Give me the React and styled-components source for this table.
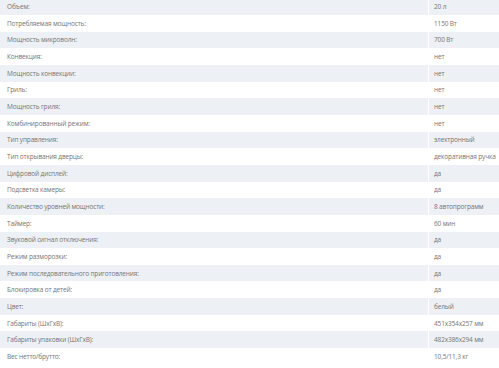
import React from "react";
import styled, { createGlobalStyle } from "styled-components";

const Global = createGlobalStyle`
  html, body { margin: 0; padding: 0; background: #fff; }
  body { font-family: "Open Sans", "Liberation Sans", sans-serif; }
`;

const rows = [
  ["Объем:", "20 л"],
  ["Потребляемая мощность:", "1150 Вт"],
  ["Мощность микроволн:", "700 Вт"],
  ["Конвекция:", "нет"],
  ["Мощность конвекции:", "нет"],
  ["Гриль:", "нет"],
  ["Мощность гриля:", "нет"],
  ["Комбинированный режим:", "нет"],
  ["Тип управления:", "электронный"],
  ["Тип открывания дверцы:", "декоративная ручка"],
  ["Цифровой дисплей:", "да"],
  ["Подсветка камеры:", "да"],
  ["Количество уровней мощности:", "8 автопрограмм"],
  ["Таймер:", "60 мин"],
  ["Звуковой сигнал отключения:", "да"],
  ["Режим разморозки:", "да"],
  ["Режим последовательного приготовления:", "да"],
  ["Блокировка от детей:", "да"],
  ["Цвет:", "белый"],
  ["Габариты (ШхГхВ):", "451x354x257 мм"],
  ["Габариты упаковки (ШхГхВ):", "482x386x294 мм"],
  ["Вес нетто/брутто:", "10,5/11,3 кг"],
];

const Table = styled.div`
  display: grid;
  grid-template-columns: 428px 1fr;
  grid-auto-rows: 16.67px;
  margin-top: -1.7px;
  width: 499px;
`;

const Cell = styled.div`
  display: flex;
  align-items: center;
  padding-left: ${(p) => (p.$value ? "5px" : "7px")};
  background: ${(p) => (p.$striped ? "#edf0f4" : "#ffffff")};
  border-left: ${(p) => (p.$value ? "1px solid #ffffff" : "none")};
  color: #767676;
  font-size: 6.5px;
  letter-spacing: -0.15px;
  font-weight: 400;
  white-space: nowrap;
  overflow: hidden;
`;

export default function App() {
  return (
    <>
      <Global />
      <Table>
        {rows.map(([label, value], i) => (
          <React.Fragment key={i}>
            <Cell $striped={i % 2 === 0}>{label}</Cell>
            <Cell $striped={i % 2 === 0} $value>
              {value}
            </Cell>
          </React.Fragment>
        ))}
      </Table>
    </>
  );
}
